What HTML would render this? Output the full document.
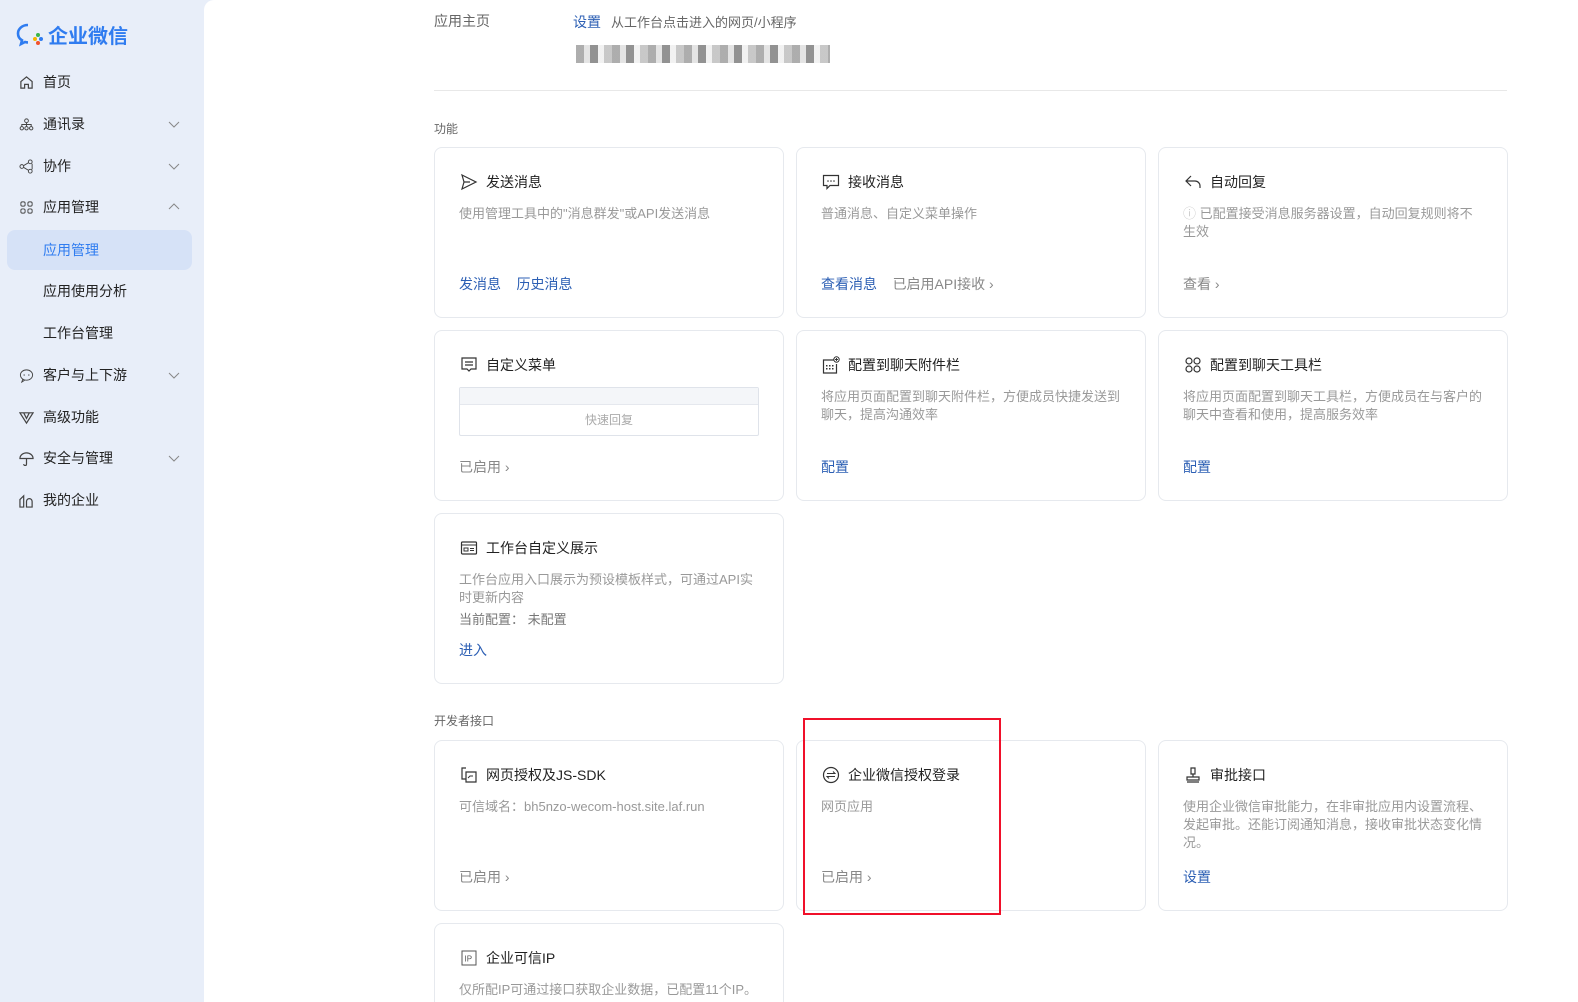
<!DOCTYPE html>
<html style="overflow:hidden;width:1578px;height:1002px"><head><meta charset="utf-8"><style>
*{margin:0;padding:0;box-sizing:border-box}
body{width:1578px;height:1002px;overflow:hidden;background:#e8eef9;font-family:"Liberation Sans","Noto Sans CJK SC",sans-serif;position:relative;color:#222}
.side{position:absolute;left:0;top:0;width:204px;height:1002px}
.logo{position:absolute;left:16px;top:20px;font-size:20px;color:#2f7cf0;font-weight:bold;display:flex;align-items:center;gap:4px}
.nav{position:absolute;left:0;width:204px;height:40px;font-size:14px;color:#222;display:flex;align-items:center}
.nav svg.ic{position:absolute;left:19px;width:15px;height:15px}
.nav span{position:absolute;left:43px}
.nav .ar{position:absolute;left:168px;width:12px;height:12px}
.act{left:7px;width:185px;background:#d6e2f7;border-radius:8px;color:#2f7cf0}
.act span{left:36px}
.main{position:absolute;left:204px;top:0;width:1374px;height:1002px;background:#fff;border-top-left-radius:10px}
.t{position:absolute;font-size:13px;color:#666}
.card{position:absolute;width:350px;height:171px;border:1px solid #e6e9ee;border-radius:8px;background:#fff;overflow:hidden}
.card .ti{position:absolute;left:51px;top:24px;font-size:14px;color:#222}
.card .ic{position:absolute;left:25px;top:25px;width:18px;height:18px}
.card .ds{position:absolute;left:24px;top:57px;right:24px;font-size:13px;color:#999;line-height:18px}
.card .lk{position:absolute;left:24px;top:126px;font-size:14px;color:#2c5fb4}
.card .lg{color:#888}
.red{position:absolute;left:803px;top:718px;width:198px;height:197px;border:2px solid #f0102a}
</style></head><body>
<div class="side">
<div class="logo"><svg width="28" height="26" viewBox="0 0 28 26"><path d="M12 3C6 3 2 7 2 11.5c0 3 1.6 5.4 4 6.8L5 22l4-2c1 .3 2 .4 3 .4" fill="none" stroke="#2f7cf0" stroke-width="2.6"/><circle cx="19" cy="17" r="2" fill="#f5b400"/><circle cx="22" cy="13" r="2" fill="#3bb54a"/><circle cx="22" cy="21" r="2" fill="#f0522d"/><circle cx="25" cy="17" r="2" fill="#2f7cf0"/></svg>企业微信</div>
<div class="nav" style="top:62px"><svg class="ic" viewBox="0 0 16 16"><path d="M2 7l6-5 6 5v7H10v-4H6v4H2z" fill="none" stroke="#444" stroke-width="1.3"/></svg><span>首页</span></div>
<div class="nav" style="top:104px"><svg class="ic" viewBox="0 0 16 16"><circle cx="8" cy="4" r="2" fill="none" stroke="#444"/><circle cx="3" cy="12" r="1.8" fill="none" stroke="#444"/><circle cx="8" cy="12" r="1.8" fill="none" stroke="#444"/><circle cx="13" cy="12" r="1.8" fill="none" stroke="#444"/><path d="M8 6v4M3 10V8h10v2" fill="none" stroke="#444"/></svg><span>通讯录</span><svg class="ar" viewBox="0 0 12 12"><path d="M1 4l5 5 5-5" fill="none" stroke="#888"/></svg></div>
<div class="nav" style="top:146px"><svg class="ic" viewBox="0 0 16 16"><circle cx="3" cy="8" r="2" fill="none" stroke="#444"/><circle cx="12" cy="3" r="2" fill="none" stroke="#444"/><circle cx="12" cy="13" r="2" fill="none" stroke="#444"/><path d="M5 7l5-3M5 9l5 3M14 5v6" fill="none" stroke="#444"/></svg><span>协作</span><svg class="ar" viewBox="0 0 12 12"><path d="M1 4l5 5 5-5" fill="none" stroke="#888"/></svg></div>
<div class="nav" style="top:187px"><svg class="ic" viewBox="0 0 16 16"><g fill="none" stroke="#444"><rect x="2" y="2" width="4.5" height="4.5" rx="1.5"/><rect x="9.5" y="2" width="4.5" height="4.5" rx="1.5"/><rect x="2" y="9.5" width="4.5" height="4.5" rx="1.5"/><rect x="9.5" y="9.5" width="4.5" height="4.5" rx="1.5"/></g></svg><span>应用管理</span><svg class="ar" viewBox="0 0 12 12"><path d="M1 8l5-5 5 5" fill="none" stroke="#888"/></svg></div>
<div class="nav act" style="top:230px"><span>应用管理</span></div>
<div class="nav" style="top:271px"><span>应用使用分析</span></div>
<div class="nav" style="top:313px"><span>工作台管理</span></div>
<div class="nav" style="top:355px"><svg class="ic" viewBox="0 0 16 16"><ellipse cx="8" cy="7.5" rx="6.5" ry="5.5" fill="none" stroke="#444"/><path d="M4 12l-1 3 3-2" fill="none" stroke="#444"/><circle cx="5.5" cy="7.5" r=".7" fill="#444"/><circle cx="10.5" cy="7.5" r=".7" fill="#444"/></svg><span>客户与上下游</span><svg class="ar" viewBox="0 0 12 12"><path d="M1 4l5 5 5-5" fill="none" stroke="#888"/></svg></div>
<div class="nav" style="top:397px"><svg class="ic" viewBox="0 0 16 16"><path d="M1 3h14L8 14zM5 3l3 6 3-6" fill="none" stroke="#444" stroke-width="1.3"/></svg><span>高级功能</span></div>
<div class="nav" style="top:438px"><svg class="ic" viewBox="0 0 16 16"><path d="M1 8a7 6 0 0 1 14 0zM8 8v6a1.5 1.5 0 0 1-3 0" fill="none" stroke="#444" stroke-width="1.3"/></svg><span>安全与管理</span><svg class="ar" viewBox="0 0 12 12"><path d="M1 4l5 5 5-5" fill="none" stroke="#888"/></svg></div>
<div class="nav" style="top:480px"><svg class="ic" viewBox="0 0 16 16"><path d="M1 15V7l4-4v12zM8 15V9a3 3 0 0 1 6 0v6z" fill="none" stroke="#444" stroke-width="1.3"/></svg><span>我的企业</span></div>
</div>
<div class="main"></div>
<div class="t" style="left:434px;top:11px;font-size:14px">应用主页</div>
<div class="t" style="left:573px;top:12px;color:#2c5fb4;font-size:14px">设置</div>
<div class="t" style="left:611px;top:12px">从工作台点击进入的网页/小程序</div>
<div style="position:absolute;left:576px;top:45px;width:254px;height:18px;background:repeating-linear-gradient(90deg,#999 0 8px,#ddd 8px 14px,#777 14px 22px,#eee 22px 28px,#bbb 28px 36px);opacity:.8"></div>
<div style="position:absolute;left:434px;top:90px;width:1073px;height:1px;background:#e8e8e8"></div>
<div class="t" style="left:434px;top:120px;font-size:12px">功能</div>
<div class="t" style="left:434px;top:712px;font-size:12px">开发者接口</div>

<div class="card" style="left:434px;top:147px"><svg class="ic" viewBox="0 0 18 18"><path d="M2 2l14 7-14 7 2-7zM4 9h6" fill="none" stroke="#333" stroke-width="1.2"/></svg><div class="ti">发送消息</div><div class="ds">使用管理工具中的"消息群发"或API发送消息</div><div class="lk">发消息 &nbsp;&nbsp; 历史消息</div></div>
<div class="card" style="left:796px;top:147px"><svg class="ic" viewBox="0 0 18 18"><path d="M1.5 2.5h15v10H8l-3 3v-3H1.5z" fill="none" stroke="#333" stroke-width="1.2"/><circle cx="6" cy="8" r=".8" fill="#333"/><circle cx="9" cy="8" r=".8" fill="#333"/><circle cx="12" cy="8" r=".8" fill="#333"/></svg><div class="ti">接收消息</div><div class="ds">普通消息、自定义菜单操作</div><div class="lk">查看消息 &nbsp;&nbsp; <span class="lg">已启用API接收 ›</span></div></div>
<div class="card" style="left:1158px;top:147px"><svg class="ic" viewBox="0 0 18 18"><path d="M7 3L2 8l5 5M2 8h9a5 5 0 0 1 5 5v2" fill="none" stroke="#333" stroke-width="1.2"/></svg><div class="ti">自动回复</div><div class="ds"><span style="color:#ccc">ⓘ</span> 已配置接受消息服务器设置，自动回复规则将不生效</div><div class="lk lg">查看 ›</div></div>

<div class="card" style="left:434px;top:330px"><svg class="ic" viewBox="0 0 18 18"><path d="M2 2h14v11h-5l-2 2-2-2H2zM5 6h8M5 9h8" fill="none" stroke="#333" stroke-width="1.2"/></svg><div class="ti">自定义菜单</div><div style="position:absolute;left:24px;top:56px;width:300px;height:49px;border:1px solid #dfe3ea;border-radius:2px"><div style="height:17px;background:#f4f6f9;border-bottom:1px solid #e5e8ee"></div><div style="text-align:center;font-size:12px;color:#aaa;margin-top:6px">快速回复</div></div><div class="lk lg">已启用 ›</div></div>
<div class="card" style="left:796px;top:330px"><svg class="ic" viewBox="0 0 18 18"><path d="M12 4H1.5v13h13V8" fill="none" stroke="#333" stroke-width="1.2"/><circle cx="14.5" cy="3.5" r="2.7" fill="none" stroke="#333"/><path d="M14.5 2v3M13 3.5h3" stroke="#333"/><g fill="#333"><rect x="4" y="9" width="1.5" height="1.5"/><rect x="7" y="9" width="1.5" height="1.5"/><rect x="10" y="9" width="1.5" height="1.5"/><rect x="4" y="12" width="1.5" height="1.5"/><rect x="7" y="12" width="1.5" height="1.5"/><rect x="10" y="12" width="1.5" height="1.5"/></g></svg><div class="ti">配置到聊天附件栏</div><div class="ds">将应用页面配置到聊天附件栏，方便成员快捷发送到聊天，提高沟通效率</div><div class="lk">配置</div></div>
<div class="card" style="left:1158px;top:330px"><svg class="ic" viewBox="0 0 18 18"><g fill="none" stroke="#333" stroke-width="1.2"><circle cx="5" cy="5" r="3"/><circle cx="13" cy="5" r="3"/><circle cx="5" cy="13" r="3"/><circle cx="13" cy="13" r="3"/></g></svg><div class="ti">配置到聊天工具栏</div><div class="ds">将应用页面配置到聊天工具栏，方便成员在与客户的聊天中查看和使用，提高服务效率</div><div class="lk">配置</div></div>

<div class="card" style="left:434px;top:513px"><svg class="ic" viewBox="0 0 18 18"><rect x="1.5" y="3" width="15" height="12" rx="1" fill="none" stroke="#333" stroke-width="1.2"/><path d="M1.5 6h15M4 9h4v3H4zM10 9.5h4M10 11.5h4" fill="none" stroke="#333"/></svg><div class="ti">工作台自定义展示</div><div class="ds">工作台应用入口展示为预设模板样式，可通过API实时更新内容<br><span style="line-height:26px;color:#777">当前配置： 未配置</span></div><div class="lk" style="top:126px">进入</div></div>

<div class="card" style="left:434px;top:740px"><svg class="ic" viewBox="0 0 18 18"><path d="M6 2H2v11h4M6 6h10v10H6z" fill="none" stroke="#333" stroke-width="1.2"/><path d="M8 12l2-2h3" fill="none" stroke="#333"/></svg><div class="ti">网页授权及JS-SDK</div><div class="ds">可信域名：bh5nzo-wecom-host.site.laf.run</div><div class="lk lg">已启用 ›</div></div>
<div class="card" style="left:796px;top:740px"><svg class="ic" viewBox="0 0 18 18"><circle cx="9" cy="9" r="7.5" fill="none" stroke="#333" stroke-width="1.2"/><path d="M5 7.5h8l-2-2M13 10.5H5l2 2" fill="none" stroke="#333"/></svg><div class="ti">企业微信授权登录</div><div class="ds">网页应用</div><div class="lk lg">已启用 ›</div></div>
<div class="card" style="left:1158px;top:740px"><svg class="ic" viewBox="0 0 18 18"><path d="M7 2h4v6h-4zM9 8v3M3 11h12v3H3zM3 16h12" fill="none" stroke="#333" stroke-width="1.2"/></svg><div class="ti">审批接口</div><div class="ds">使用企业微信审批能力，在非审批应用内设置流程、发起审批。还能订阅通知消息，接收审批状态变化情况。</div><div class="lk">设置</div></div>
<div class="card" style="left:434px;top:923px;height:79px;border-bottom:none;border-radius:8px 8px 0 0"><svg class="ic" viewBox="0 0 18 18"><rect x="2" y="2" width="14" height="14" fill="none" stroke="#555"/><text x="4.5" y="12.5" font-size="8" fill="#555" font-family="Liberation Sans">IP</text></svg><div class="ti">企业可信IP</div><div class="ds">仅所配IP可通过接口获取企业数据，已配置11个IP。</div></div>
<div class="red"></div>
</body></html>
